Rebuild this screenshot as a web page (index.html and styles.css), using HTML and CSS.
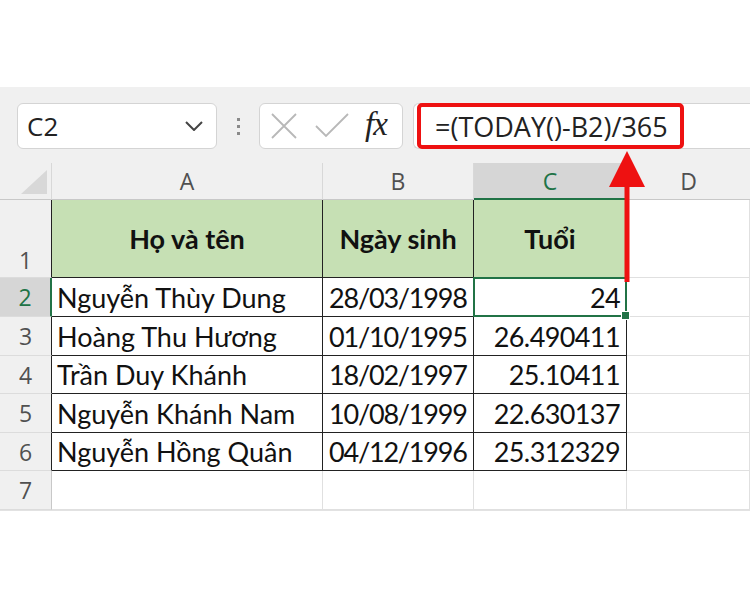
FILE: index.html
```html
<!DOCTYPE html>
<html>
<head>
<meta charset="utf-8">
<link rel="stylesheet" href="styles.css">
</head>
<body>
<div class="page">
  <div class="top-space"></div>
  <div class="excel">
    <div class="formula-row">
      <div class="name-box">
        <span class="name-text">C2</span>
        <svg class="chev" width="18" height="10" viewBox="0 0 18 10"><polyline points="1,1 9,9 17,1" fill="none" stroke="#444" stroke-width="2"/></svg>
      </div>
      <div class="dots"><span></span><span></span><span></span></div>
      <div class="fx-box">
        <svg class="icon-x" width="26" height="26" viewBox="0 0 26 26"><path d="M1 1 L25 25 M25 1 L1 25" stroke="#b8b8b8" stroke-width="1.8" fill="none"/></svg>
        <svg class="icon-check" width="34" height="26" viewBox="0 0 34 26"><polyline points="1,13 11,23 33,1" stroke="#b8b8b8" stroke-width="1.8" fill="none"/></svg>
        <span class="fx">fx</span>
      </div>
      <div class="formula-input">
        <div class="formula-highlight">=(TODAY()-B2)/365</div>
      </div>
    </div>
    <div class="sheet">
      <div class="corner"><span class="tri"></span></div>
      <div class="ch">A</div>
      <div class="ch">B</div>
      <div class="ch ch-sel">C</div>
      <div class="ch ch-last">D</div>

      <div class="rh rh-t rh-bottom">1</div>
      <div class="cell t head">Họ và tên</div>
      <div class="cell t head">Ngày sinh</div>
      <div class="cell t head">Tuổi</div>
      <div class="cell"></div>

      <div class="rh rh-sel">2</div>
      <div class="cell t">Nguyễn Thùy Dung</div>
      <div class="cell t date">28/03/1998</div>
      <div class="cell t num selected">24</div>
      <div class="cell"></div>

      <div class="rh rh-t">3</div>
      <div class="cell t">Hoàng Thu Hương</div>
      <div class="cell t date">01/10/1995</div>
      <div class="cell t num">26.490411</div>
      <div class="cell"></div>

      <div class="rh rh-t">4</div>
      <div class="cell t">Trần Duy Khánh</div>
      <div class="cell t date">18/02/1997</div>
      <div class="cell t num">25.10411</div>
      <div class="cell"></div>

      <div class="rh rh-t">5</div>
      <div class="cell t">Nguyễn Khánh Nam</div>
      <div class="cell t date">10/08/1999</div>
      <div class="cell t num">22.630137</div>
      <div class="cell"></div>

      <div class="rh rh-t">6</div>
      <div class="cell t">Nguyễn Hồng Quân</div>
      <div class="cell t date">04/12/1996</div>
      <div class="cell t num">25.312329</div>
      <div class="cell"></div>

      <div class="rh">7</div>
      <div class="cell"></div>
      <div class="cell"></div>
      <div class="cell"></div>
      <div class="cell"></div>
    </div>
  </div>
  <svg class="arrow" width="40" height="135" viewBox="0 0 40 135">
    <polygon points="18,0 0,36 36,36" fill="#ee1111"/>
    <rect x="15.5" y="34" width="5" height="97" fill="#ee1111"/>
  </svg>
</div>
</body>
</html>
```
FILE: styles.css
```css
* { box-sizing: border-box; }
html, body { margin: 0; padding: 0; background: #ffffff; }
.page { position: relative; width: 750px; height: 600px; overflow: hidden; }
.top-space { height: 87px; }
.excel {
  background: #f0f0f0;
  padding-top: 16px;
  border-bottom: 1px solid #e2e2e2;
}
.formula-row {
  display: flex;
  height: 46px;
  margin-bottom: 14px;
  align-items: stretch;
}
.name-box {
  margin-left: 17px;
  width: 200px;
  background: #fff;
  border: 1px solid #d4d4d4;
  border-radius: 6px;
  display: flex;
  align-items: center;
  justify-content: space-between;
  padding: 0 13px 0 9px;
}
.name-text {
  font-family: "Open Sans", "Noto Sans", sans-serif;
  font-size: 26px;
  color: #222;
}
.dots {
  width: 42px;
  display: flex;
  flex-direction: column;
  align-items: center;
  justify-content: center;
  gap: 4px;
}
.dots span { width: 3px; height: 3px; background: #8a8a8a; display: block; }
.fx-box {
  width: 144px;
  background: #fff;
  border: 1px solid #d4d4d4;
  border-radius: 6px;
  display: flex;
  align-items: center;
  padding-left: 11px;
}
.icon-x { margin-right: 18px; }
.icon-check { margin-right: 16px; }
.fx {
  font-family: "Liberation Serif", serif;
  font-style: italic;
  font-size: 33px;
  color: #222;
  letter-spacing: -1px;
  margin-top: -4px;
}
.formula-input {
  flex: 1;
  margin-left: 10px;
  background: #fff;
  border: 1px solid #d4d4d4;
  border-right: none;
  border-radius: 6px 0 0 6px;
  display: flex;
}
.formula-highlight {
  margin: -1px 0 -1px 3px;
  width: 267px;
  border: 4px solid #ee1111;
  border-radius: 5px;
  padding-left: 14px;
  display: flex;
  align-items: center;
  font-family: "Open Sans", "Noto Sans", sans-serif;
  font-size: 27px;
  color: #222;
  white-space: nowrap;
}
.sheet {
  display: grid;
  grid-template-columns: 52px 271px 151px 153px 1fr;
  grid-template-rows: 37px 78px 39px 39px 38px 39px 38px 39px;
}
.corner {
  position: relative;
  border-right: 1px solid #d8d8d8;
  border-bottom: 1px solid #c8c8c8;
  display: flex;
  align-items: flex-end;
  justify-content: flex-end;
  padding: 0 4px 5px 0;
}
.tri {
  width: 0; height: 0;
  border-left: 26px solid transparent;
  border-bottom: 24px solid #d8d8d8;
}
.ch {
  border-right: 1px solid #d8d8d8;
  border-bottom: 1px solid #c8c8c8;
  display: flex;
  align-items: center;
  justify-content: center;
  font-family: "Open Sans", "Noto Sans", sans-serif;
  font-size: 23px;
  color: #505050;
}
.ch-sel {
  background: #d6d6d6;
  color: #217346;
  border-bottom: 2px solid #217346;
}
.ch-last { border-right: none; }
.rh {
  border-right: 1px solid #c8c8c8;
  border-bottom: 1px solid #dcdcdc;
  display: flex;
  align-items: center;
  justify-content: center;
  font-family: "Open Sans", "Noto Sans", sans-serif;
  font-size: 23px;
  color: #505050;
}
.rh-t { border-right: 1px solid #222; }
.rh-bottom { align-items: flex-end; padding-bottom: 1px; }
.rh-sel {
  background: #d6d6d6;
  color: #217346;
  border-right: 2px solid #217346;
}
.cell {
  background: #fff;
  border-right: 1px solid #e0e0e0;
  border-bottom: 1px solid #e0e0e0;
  display: flex;
  align-items: center;
  padding: 0 5px;
  font-family: "Lato", "Liberation Sans", sans-serif;
  font-size: 27px;
  color: #111;
  white-space: nowrap;
}
.cell.t {
  border-right: 1px solid #222;
  border-bottom: 1px solid #222;
}
.date { letter-spacing: -1.2px; padding-left: 6px; }
.num { justify-content: flex-end; letter-spacing: -0.6px; padding-right: 6px; }
.head {
  background: #c6e0b4;
  font-weight: bold;
  justify-content: center;
  letter-spacing: 0;
}
.selected { position: relative; }
.selected::before {
  content: "";
  position: absolute;
  left: -1px; top: -1px; right: -1px; bottom: -1px;
  border: 2px solid #217346;
}
.selected::after {
  content: "";
  position: absolute;
  right: -4px; bottom: -4px;
  width: 7px; height: 7px;
  background: #217346;
  border: 1px solid #fff;
}
.arrow { position: absolute; left: 609px; top: 151px; }
```
